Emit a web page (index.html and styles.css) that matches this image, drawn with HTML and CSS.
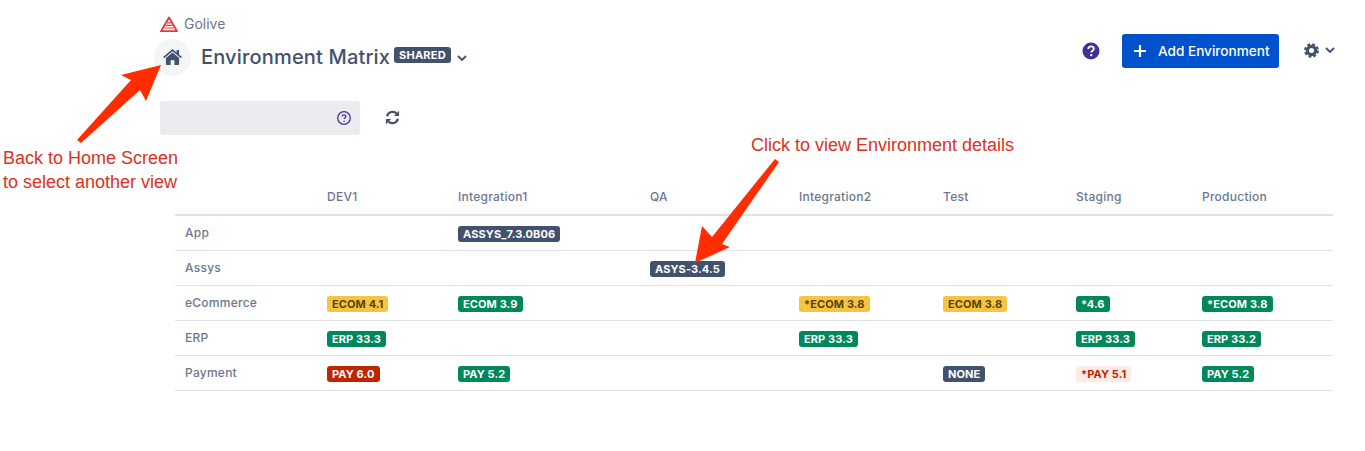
FILE: index.html
```html
<!DOCTYPE html>
<html lang="en">

<head>
  <meta charset="UTF-8">
  <meta name="viewport" content="width=device-width, initial-scale=1.0">
  <title>Environment Matrix</title>
  <link rel="stylesheet" href="styles.css">
</head>

<body>
  <header class="top">
    <div class="breadcrumb">
      <svg class="logo" viewBox="0 0 18 16" width="18" height="16">
        <path d="M1 15.200 9 1.600l8 13.600z" fill="none" stroke="#e5393a" stroke-width="1.900" stroke-linejoin="round"/>
        <path d="M7.200 6.800h3.600M5.800 9.400h6.400M4.600 12h8.800" fill="none" stroke="#e5393a" stroke-width="1.200"/>
      </svg>
      <span>Golive</span>
    </div>
    <div class="title-row">
      <a class="home">
        <svg viewBox="0 0 20 17" width="19" height="16">
          <path d="M10 0 0 8.400l1.100 1.300L10 2.300l8.900 7.400L20 8.400l-3-2.500V1h-2.600v2.700z" fill="#42526e"/>
          <path d="M10 3.700 3 9.500V16.200c0 .4.300.8.800.8H8v-5h4v5h4.200c.5 0 .8-.4.800-.8V9.500z" fill="#42526e"/>
        </svg>
      </a>
      <h1>Environment Matrix</h1>
      <span class="lozenge dark shared">Shared</span>
      <svg class="chevron" viewBox="0 0 10 7" width="10" height="7"><path d="M1.500 1.500 5 5l3.500-3.500" fill="none" stroke="#42526e" stroke-width="1.800" stroke-linecap="round"/></svg>
      <div class="actions">
        <svg class="help" viewBox="0 0 18 18" width="18" height="18">
          <circle cx="9" cy="9" r="8.500" fill="#403294"/>
          <path d="M6.300 7c0-1.700 1.200-2.600 2.800-2.600S11.800 5.300 11.800 6.800c0 1.800-2.500 1.900-2.500 3.600" fill="none" stroke="#fff" stroke-width="1.900"/>
          <circle cx="9.200" cy="13.100" r="1.200" fill="#fff"/>
        </svg>
        <button class="add-btn">
          <svg viewBox="0 0 12 12" width="12" height="12"><path d="M6 .5v11M.5 6h11" stroke="#fff" stroke-width="2.200" stroke-linecap="round"/></svg>
          Add Environment
        </button>
        <div class="settings">
          <svg viewBox="0 0 16 16" width="15" height="15">
            <circle cx="8" cy="8" r="4.400" fill="none" stroke="#42526e" stroke-width="3.400"/>
            <circle cx="8" cy="8" r="6.700" fill="none" stroke="#42526e" stroke-width="2.400" stroke-dasharray="3 2.260"/>
          </svg>
          <svg viewBox="0 0 10 7" width="10" height="7"><path d="M1.500 1.500 5 5l3.500-3.500" fill="none" stroke="#42526e" stroke-width="1.800" stroke-linecap="round"/></svg>
        </div>
      </div>
    </div>
  </header>

  <div class="filter-row">
    <div class="search">
      <svg viewBox="0 0 14 14" width="14" height="14">
        <circle cx="7" cy="7" r="6.300" fill="none" stroke="#403294" stroke-width="1.300"/>
        <path d="M5.100 5.600c0-1.200.9-1.800 1.900-1.800s1.900.6 1.900 1.700c0 1.300-1.800 1.300-1.800 2.600" fill="none" stroke="#403294" stroke-width="1.300"/>
        <circle cx="7.100" cy="10.200" r=".8" fill="#403294"/>
      </svg>
    </div>
    <svg class="refresh" viewBox="0 0 16 16" width="15" height="15">
      <path d="M2.200 6.600A6 6 0 0 1 12.400 3.800" fill="none" stroke="#42526e" stroke-width="2.400"/>
      <path d="M15 .8v5.600H9.400z" fill="#42526e"/>
      <path d="M13.800 9.400A6 6 0 0 1 3.600 12.200" fill="none" stroke="#42526e" stroke-width="2.400"/>
      <path d="M1 15.200V9.600h5.600z" fill="#42526e"/>
    </svg>
  </div>

  <table class="matrix">
    <colgroup>
      <col class="c1"><col class="c2"><col class="c3"><col class="c4"><col class="c5"><col class="c6"><col class="c7"><col class="c8">
    </colgroup>
    <thead>
      <tr>
        <th></th><th>DEV1</th><th>Integration1</th><th>QA</th><th>Integration2</th><th>Test</th><th>Staging</th><th>Production</th>
      </tr>
    </thead>
    <tbody>
      <tr>
        <td>App</td><td></td><td><span class="lozenge dark">ASSYS_7.3.0B06</span></td><td></td><td></td><td></td><td></td><td></td>
      </tr>
      <tr>
        <td>Assys</td><td></td><td></td><td><span class="lozenge dark">ASYS-3.4.5</span></td><td></td><td></td><td></td><td></td>
      </tr>
      <tr>
        <td>eCommerce</td>
        <td><span class="lozenge yellow">ECOM 4.1</span></td>
        <td><span class="lozenge green">ECOM 3.9</span></td>
        <td></td>
        <td><span class="lozenge yellow">*ECOM 3.8</span></td>
        <td><span class="lozenge yellow">ECOM 3.8</span></td>
        <td><span class="lozenge green">*4.6</span></td>
        <td><span class="lozenge green">*ECOM 3.8</span></td>
      </tr>
      <tr>
        <td>ERP</td>
        <td><span class="lozenge green">ERP 33.3</span></td>
        <td></td><td></td>
        <td><span class="lozenge green">ERP 33.3</span></td>
        <td></td>
        <td><span class="lozenge green">ERP 33.3</span></td>
        <td><span class="lozenge green">ERP 33.2</span></td>
      </tr>
      <tr>
        <td>Payment</td>
        <td><span class="lozenge red">PAY 6.0</span></td>
        <td><span class="lozenge green">PAY 5.2</span></td>
        <td></td><td></td>
        <td><span class="lozenge dark">NONE</span></td>
        <td><span class="lozenge pale">*PAY 5.1</span></td>
        <td><span class="lozenge green">PAY 5.2</span></td>
      </tr>
    </tbody>
  </table>

  <!-- annotations drawn over the screenshot -->
  <svg class="arrows" viewBox="0 0 1365 451" width="1365" height="451">
    <path d="M161 65 146 101 140 90 81 143 77 140 131 80 121 75z" fill="#ff2d00"/>
    <path d="M695 263 702 226 712 237 775 159 779 162 722 244 730 247z" fill="#ff2d00"/>
  </svg>
  <p class="note note-home">Back to Home Screen<br>to select another view</p>
  <p class="note note-env">Click to view Environment details</p>
</body>

</html>
```

FILE: styles.css
```css
body {
  margin: 0;
  height: 451px;
  overflow: hidden;
  position: relative;
  background-color: #fff;
  font-family: Inter, "Noto Sans", sans-serif;
  color: #42526e;
}

.top {
  padding: 15px 30px 0 160px;
}

.breadcrumb {
  display: flex;
  align-items: center;
  gap: 6px;
  height: 17px;
  font-size: 14px;
  color: #6b778c;
}

.title-row {
  display: flex;
  align-items: center;
  height: 38px;
  margin-top: 6px;
  margin-left: -6px;
}

.home {
  display: flex;
  align-items: center;
  justify-content: center;
  width: 37px;
  height: 37px;
  border-radius: 50%;
  background-color: #f4f5f7;
}

h1 {
  margin: 0 4px 0 10px;
  font-size: 20px;
  font-weight: 500;
  letter-spacing: .17px;
  color: #42526e;
}

.chevron {
  margin-left: 6px;
  margin-top: 3px;
}

.actions {
  display: flex;
  align-items: center;
  margin-left: auto;
  margin-top: -13px;
}

.help {
  margin-right: 22px;
}

.add-btn {
  display: flex;
  align-items: center;
  gap: 12px;
  width: 157px;
  height: 34px;
  padding: 0 0 0 12px;
  border: none;
  border-radius: 3px;
  background-color: #0052cc;
  color: #fff;
  font-family: inherit;
  font-size: 13.6px;
  font-weight: 500;
  white-space: nowrap;
}

.add-btn svg {
  flex: none;
}

.settings {
  display: flex;
  align-items: center;
  gap: 6px;
  margin-left: 25px;
}

.filter-row {
  display: flex;
  align-items: center;
  gap: 25px;
  margin: 25px 0 0 160px;
}

.search {
  display: flex;
  align-items: center;
  justify-content: flex-end;
  box-sizing: border-box;
  width: 200px;
  height: 34px;
  padding-right: 9px;
  border-radius: 3px;
  background-color: #ebecf0;
}

.refresh {
  margin-top: -1px;
}

.matrix {
  width: 1158px;
  margin: 44px 0 0 175px;
  border-collapse: collapse;
  table-layout: fixed;
  font-size: 12px;
  font-weight: 500;
  letter-spacing: .25px;
  color: #6b778c;
}

.c1 { width: 142px; }
.c2 { width: 131px; }
.c3 { width: 192px; }
.c4 { width: 149px; }
.c5 { width: 144px; }
.c6 { width: 133px; }
.c7 { width: 126px; }
.c8 { width: 141px; }

th {
  height: 35px;
  padding: 0 10px;
  border-bottom: 2px solid #dfe1e6;
  text-align: left;
  font-weight: 500;
}

td {
  height: 33px;
  padding: 1px 10px 0;
  border-bottom: 1px solid #dfe1e6;
}

td:first-child {
  padding: 0 10px 1px;
}

.lozenge {
  display: inline-block;
  padding: 0 5px;
  border-radius: 3px;
  font-size: 11px;
  font-weight: 700;
  letter-spacing: .1px;
  line-height: 16px;
  vertical-align: middle;
}

.shared {
  margin-top: -4px;
  letter-spacing: .2px;
  text-transform: uppercase;
}

.dark { background-color: #42526e; color: #fff; }
.green { background-color: #00875a; color: #fff; }
.yellow { background-color: #f6c342; color: #594300; }
.red { background-color: #bf2600; color: #fff; }
.pale { background-color: #ffebe6; color: #bf2600; }

.arrows {
  position: absolute;
  top: 0;
  left: 0;
  pointer-events: none;
}

.note {
  position: absolute;
  margin: 0;
  font-family: "Liberation Sans", Arial, sans-serif;
  font-size: 18px;
  line-height: 24px;
  color: #e0301e;
  white-space: nowrap;
}

.note-home {
  top: 146px;
  left: 3px;
}

.note-env {
  top: 133px;
  left: 751px;
}
```
